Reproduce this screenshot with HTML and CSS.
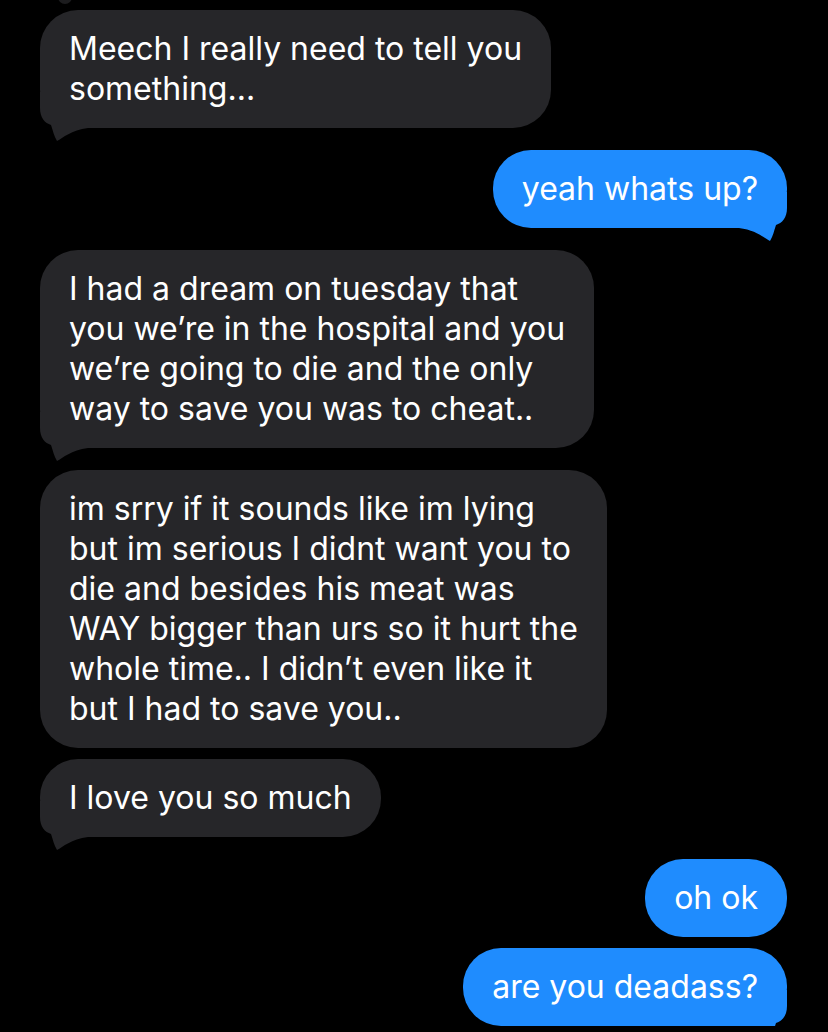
FILE: index.html
```html
<!DOCTYPE html>
<html lang="en">
<head>
    <meta charset="UTF-8">
    <meta name="viewport" content="width=device-width, initial-scale=1.0">
    <title>Messages</title>
    <link rel="stylesheet" href="styles.css">
</head>
<body>
    <div class="thread">
        <!-- tail of the message above, cut off by the top edge -->
        <div class="prev-tail"></div>

        <div class="msg them first">
            Meech I really need to tell you<br>something...
            <svg class="tail-svg" viewBox="0 0 50 50"><path d="M0,0 L0,16 C0,26 5,31 11,33 C13,39 14,44 17,49 C23,46 31,38 48,36 L48,0 Z"/></svg>
        </div>

        <div class="msg me">
            yeah whats up?
            <svg class="tail-svg" viewBox="0 0 50 50"><path d="M0,0 L0,16 C0,26 5,31 11,33 C13,39 14,44 17,49 C23,46 31,38 48,36 L48,0 Z"/></svg>
        </div>

        <div class="msg them">
            I had a dream on tuesday that<br>you we’re in the hospital and you<br>we’re going to die and the only<br>way to save you was to cheat..
            <svg class="tail-svg" viewBox="0 0 50 50"><path d="M0,0 L0,16 C0,26 5,31 11,33 C13,39 14,44 17,49 C23,46 31,38 48,36 L48,0 Z"/></svg>
        </div>

        <div class="msg them">
            im srry if it sounds like im lying<br>but im serious I didnt want you to<br>die and besides his meat was<br>WAY bigger than urs so it hurt the<br>whole time.. I didn’t even like it<br>but I had to save you..
        </div>

        <div class="msg them grouped">
            I love you so much
            <svg class="tail-svg" viewBox="0 0 50 50"><path d="M0,0 L0,16 C0,26 5,31 11,33 C13,39 14,44 17,49 C23,46 31,38 48,36 L48,0 Z"/></svg>
        </div>

        <div class="msg me">
            oh ok
        </div>

        <div class="msg me grouped">
            are you deadass?
            <svg class="tail-svg" viewBox="0 0 50 50"><path d="M0,0 L0,16 C0,26 5,31 11,33 C13,39 14,44 17,49 C23,46 31,38 48,36 L48,0 Z"/></svg>
        </div>
    </div>
</body>
</html>
```

FILE: styles.css
```css
body {
    margin: 0;
    padding: 0;
    background-color: #000;
    font-family: Inter, "Noto Sans", sans-serif;
    color: #fff;
    overflow: hidden;
}
.thread {
    display: flex;
    flex-direction: column;
    padding: 10px 41px 0 40px;
    position: relative;
}
.prev-tail {
    position: absolute;
    top: -12px;
    left: 58px;
    width: 14px;
    height: 16px;
    background-color: #1c1c1e;
    border-radius: 0 0 8px 8px;
}
.msg {
    position: relative;
    isolation: isolate;
    font-size: 32px;
    line-height: 40px;
    padding: 19px 29px;
    border-radius: 38px;
    margin-top: 22px;
    width: fit-content;
}
.msg.first {
    margin-top: 0;
}
.msg.grouped {
    margin-top: 11px;
}
.them {
    align-self: flex-start;
    background-color: #262629;
}
.me {
    align-self: flex-end;
    background-color: #1f8cfe;
}
.tail-svg {
    position: absolute;
    z-index: -1;
    bottom: -14px;
    width: 50px;
    height: 50px;
}
.them .tail-svg {
    left: 0;
    fill: #262629;
}
.me .tail-svg {
    right: 0;
    fill: #1f8cfe;
    transform: scaleX(-1);
}
```
